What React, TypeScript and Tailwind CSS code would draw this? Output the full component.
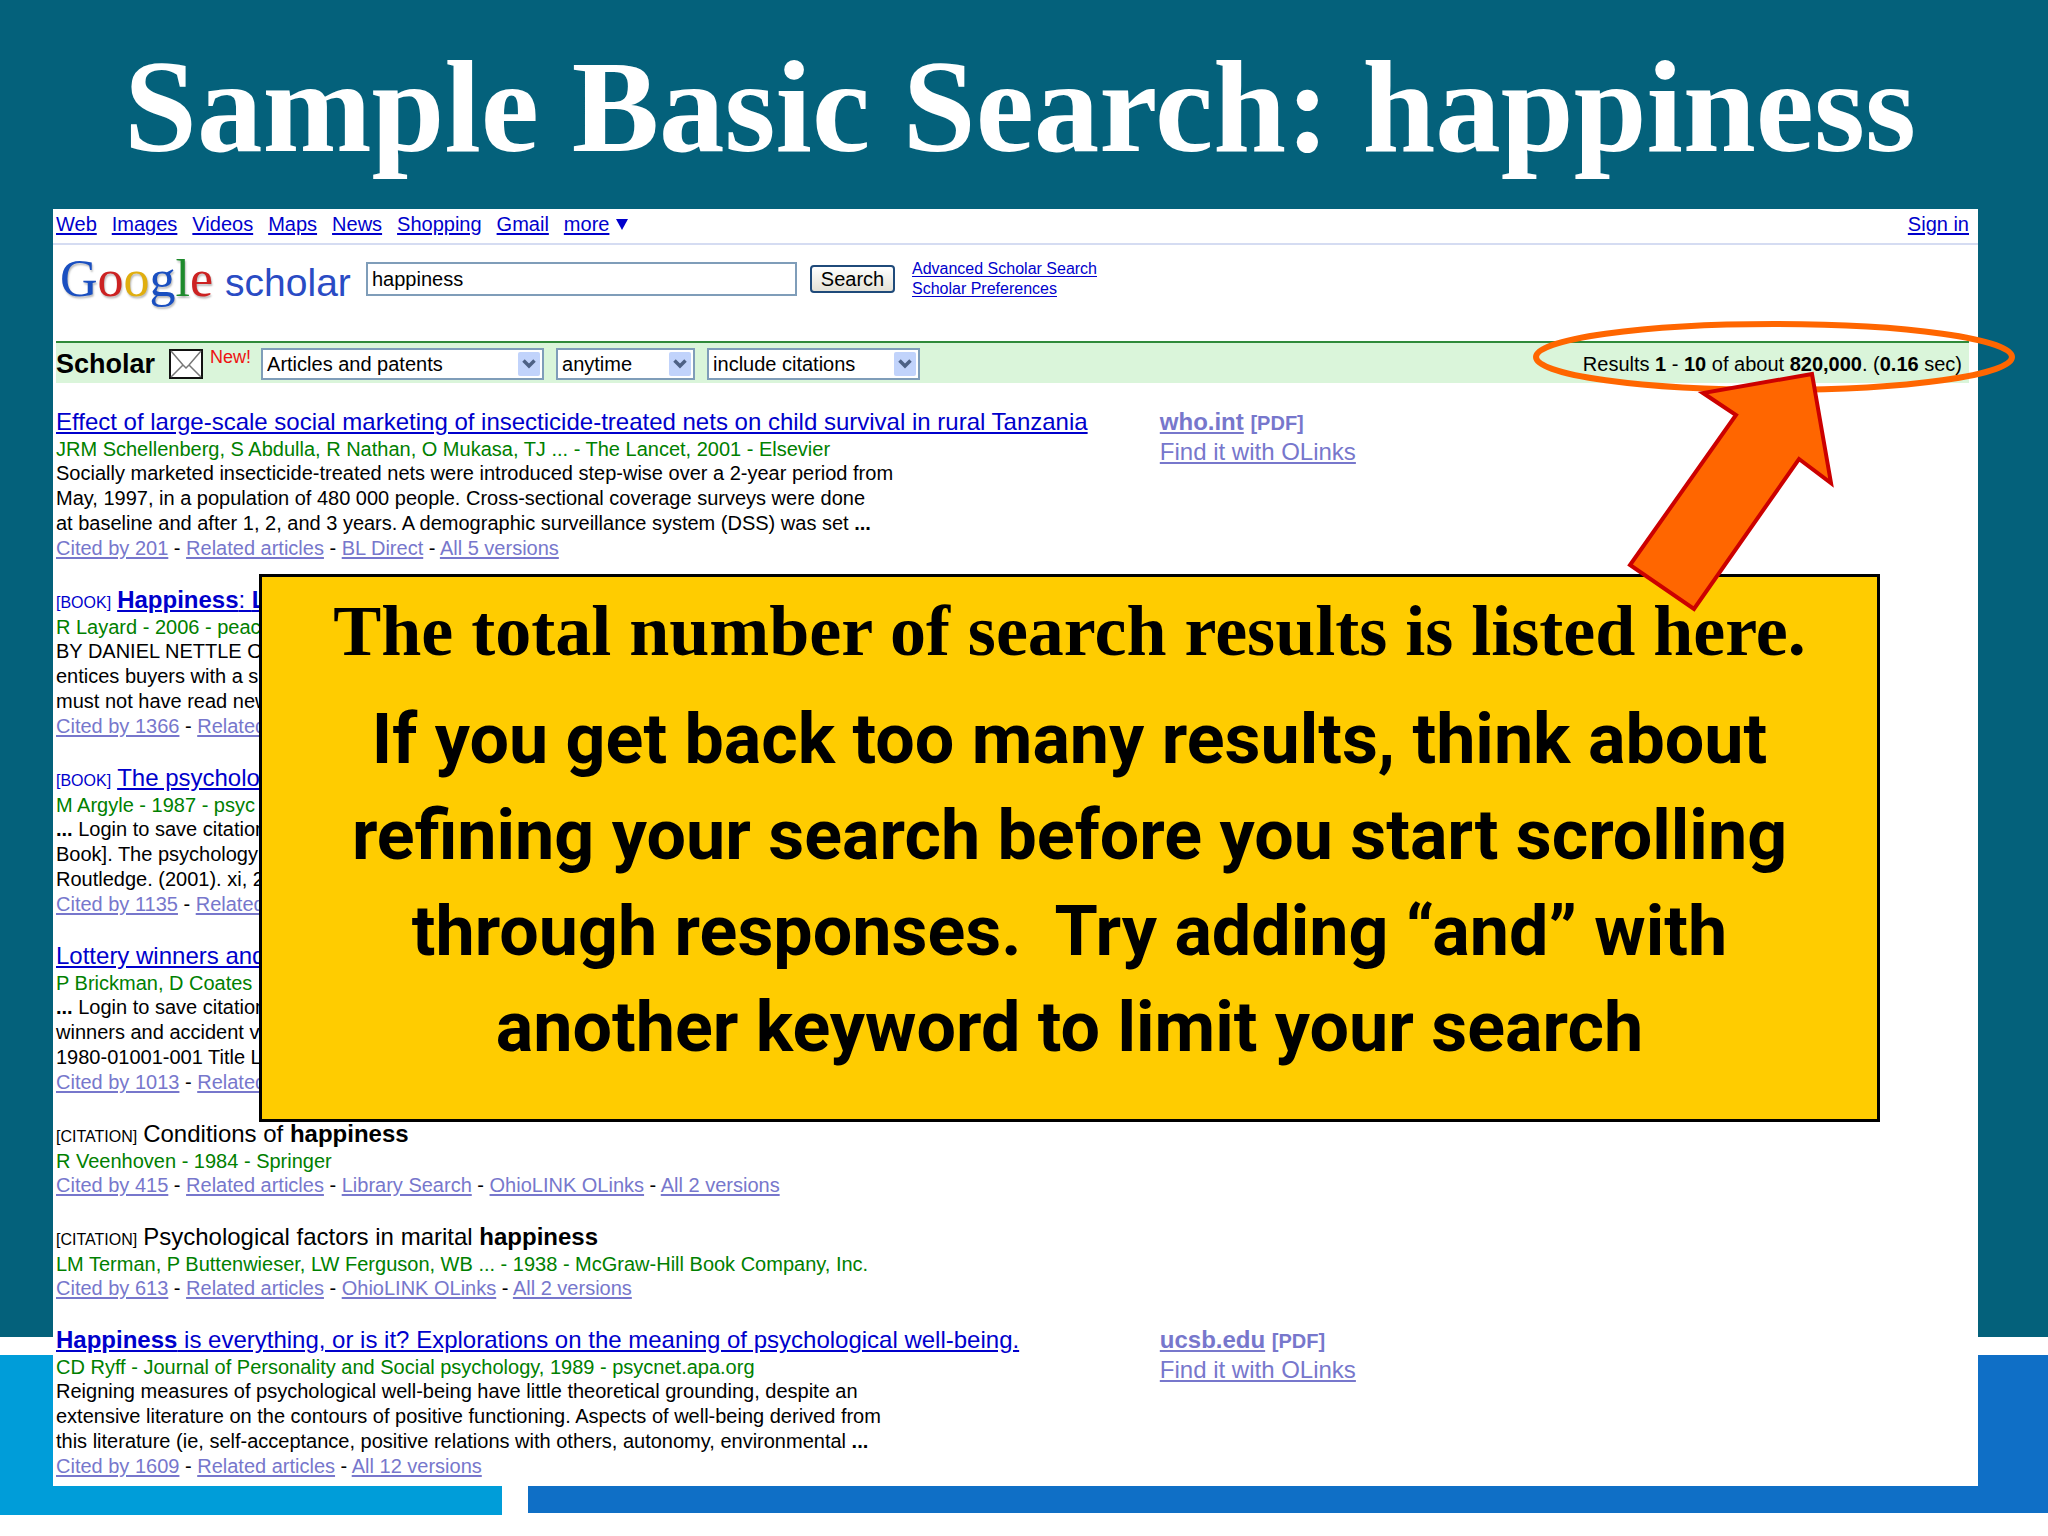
import React from 'react';

interface CiteLink {
  label: string;
}

interface Result {
  id: string;
  tag?: string;
  title: React.ReactNode;
  linked: boolean;
  source: string;
  snippet?: React.ReactNode[];
  cites: CiteLink[];
  pdf?: string;
}

const NAV_LINKS = ['Web', 'Images', 'Videos', 'Maps', 'News', 'Shopping', 'Gmail', 'more'];

const LOGO_LETTERS = [
  { char: 'G', color: 'text-[#1a4fc0]' },
  { char: 'o', color: 'text-[#cc2222]' },
  { char: 'o', color: 'text-[#e0ae10]' },
  { char: 'g', color: 'text-[#1a4fc0]' },
  { char: 'l', color: 'text-[#1e8a2c]' },
  { char: 'e', color: 'text-[#cc2222]' },
];

const toLinks = (...labels: string[]): CiteLink[] => labels.map(label => ({ label }));

const RESULTS: Result[] = [
  {
    id: 'nets',
    title: 'Effect of large-scale social marketing of insecticide-treated nets on child survival in rural Tanzania',
    linked: true,
    source: 'JRM Schellenberg, S Abdulla, R Nathan, O Mukasa, TJ ... - The Lancet, 2001 - Elsevier',
    snippet: [
      'Socially marketed insecticide-treated nets were introduced step-wise over a 2-year period from',
      'May, 1997, in a population of 480 000 people. Cross-sectional coverage surveys were done',
      <>at baseline and after 1, 2, and 3 years. A demographic surveillance system (DSS) was set <b>...</b></>,
    ],
    cites: toLinks('Cited by 201', 'Related articles', 'BL Direct', 'All 5 versions'),
    pdf: 'who.int',
  },
  {
    id: 'lessons',
    tag: '[BOOK]',
    title: <><b>Happiness</b>: <b>L</b></>,
    linked: true,
    source: 'R Layard - 2006 - peac',
    snippet: ['BY DANIEL NETTLE O', 'entices buyers with a s', 'must not have read new'],
    cites: toLinks('Cited by 1366', 'Related'),
  },
  {
    id: 'psychology',
    tag: '[BOOK]',
    title: 'The psycholog',
    linked: true,
    source: 'M Argyle - 1987 - psyc',
    snippet: [<><b>...</b> Login to save citation</>, 'Book]. The psychology', 'Routledge. (2001). xi, 2'],
    cites: toLinks('Cited by 1135', 'Related'),
  },
  {
    id: 'lottery',
    title: 'Lottery winners and',
    linked: true,
    source: 'P Brickman, D Coates',
    snippet: [<><b>...</b> Login to save citation</>, 'winners and accident v', '1980-01001-001 Title L'],
    cites: toLinks('Cited by 1013', 'Related'),
  },
  {
    id: 'conditions',
    tag: '[CITATION]',
    title: <>Conditions of <b>happiness</b></>,
    linked: false,
    source: 'R Veenhoven - 1984 - Springer',
    cites: toLinks('Cited by 415', 'Related articles', 'Library Search', 'OhioLINK OLinks', 'All 2 versions'),
  },
  {
    id: 'marital',
    tag: '[CITATION]',
    title: <>Psychological factors in marital <b>happiness</b></>,
    linked: false,
    source: 'LM Terman, P Buttenwieser, LW Ferguson, WB ... - 1938 - McGraw-Hill Book Company, Inc.',
    cites: toLinks('Cited by 613', 'Related articles', 'OhioLINK OLinks', 'All 2 versions'),
  },
  {
    id: 'wellbeing',
    title: <><b>Happiness</b> is everything, or is it? Explorations on the meaning of psychological well-being.</>,
    linked: true,
    source: 'CD Ryff - Journal of Personality and Social psychology, 1989 - psycnet.apa.org',
    snippet: [
      'Reigning measures of psychological well-being have little theoretical grounding, despite an',
      'extensive literature on the contours of positive functioning. Aspects of well-being derived from',
      <>this literature (ie, self-acceptance, positive relations with others, autonomy, environmental <b>...</b></>,
    ],
    cites: toLinks('Cited by 1609', 'Related articles', 'All 12 versions'),
    pdf: 'ucsb.edu',
  },
];

function Backdrop() {
  return (
    <div className="[grid-area:1/1] flex flex-col bg-white pb-[21px]" aria-hidden="true">
      <div className="flex-1 bg-[#04617b]" />
      <div className="mt-[18px] flex h-[160px] items-start gap-[26px]">
        <div className="h-[160px] w-[24.5%] bg-[#009dd9]" />
        <div className="h-[158px] flex-1 bg-[#0f6fc6]" />
      </div>
    </div>
  );
}

function FilterSelect({ label, value, width }: { label: string; value: string; width: string }) {
  return (
    <div className={`relative h-8 ${width}`}>
      <select
        aria-label={label}
        defaultValue={value}
        className="h-full w-full appearance-none border-2 border-[#7f9db9] bg-white pl-1 text-[20px] leading-6 text-black"
      >
        <option>{value}</option>
      </select>
      <svg className="pointer-events-none absolute right-1 top-1 h-6 w-[22px]" viewBox="0 0 22 24">
        <rect width="22" height="24" rx="2" fill="#c1d3fb" />
        <path d="M5.5 8.5 L11 14 L16.5 8.5" fill="none" stroke="#4d6185" strokeWidth="3.5" />
      </svg>
    </div>
  );
}

function ResultRow({ result }: { result: Result }) {
  return (
    <article className="mb-[25px] grid grid-cols-[57.7%_1fr] whitespace-nowrap last:mb-1">
      <div className="text-[20px]">
        <h3 className={`text-[24px] leading-[30px] ${result.linked ? 'text-[#0000cc]' : 'text-black'}`}>
          {result.tag && <span className="mr-1.5 text-[16px] leading-none">{result.tag}</span>}
          {result.linked ? <a href="#" className="underline underline-offset-2">{result.title}</a> : result.title}
        </h3>
        <p className="leading-6 text-[#008000]">{result.source}</p>
        {result.snippet?.map((line, i) => (
          <p key={i} className="leading-[25px]">{line}</p>
        ))}
        <p className="leading-6">
          {result.cites.map((cite, i) => (
            <React.Fragment key={cite.label}>
              {i > 0 && ' - '}
              <a href="#" className="text-[#7777cc] underline underline-offset-2">{cite.label}</a>
            </React.Fragment>
          ))}
        </p>
      </div>
      {result.pdf && (
        <div className="text-[24px] leading-[30px] text-[#7777cc]">
          <p className="font-bold">
            <a href="#" className="underline underline-offset-2">{result.pdf}</a>{' '}
            <span className="text-[20px] leading-none">[PDF]</span>
          </p>
          <a href="#" className="underline underline-offset-2">Find it with OLinks</a>
        </div>
      )}
    </article>
  );
}

function Callout() {
  return (
    <aside className="absolute left-[206px] right-[98px] top-[365px] border-[3px] border-black bg-[#ffcc00] pt-[10px] pb-[44px] text-center font-bold whitespace-pre text-black">
      <h2 className="mb-[16px] font-['Liberation_Serif',serif] text-[72px] leading-[88px]">
        The total number of search results is listed here.
      </h2>
      <p className="font-['Roboto',sans-serif] text-[70px] leading-[96px]">
        {'If you get back too many results, think about\nrefining your search before you start scrolling\nthrough responses.  Try adding “and” with\nanother keyword to limit your search'}
      </p>
    </aside>
  );
}

function Highlight() {
  return (
    <svg className="pointer-events-none absolute right-[-42px] top-[101px] h-[310px] w-[500px]" viewBox="0 0 500 310">
      <ellipse cx="254" cy="47" rx="238" ry="33" fill="none" stroke="#ff6600" strokeWidth="6" />
      <path
        d="M292 64 L183 83 L216 105 L110 255 L174 299 L279 149 L311 173 Z"
        fill="#ff6600"
        stroke="#cc0000"
        strokeWidth="4"
      />
    </svg>
  );
}

export default function App() {
  return (
    <div className="grid min-h-screen overflow-hidden font-['Liberation_Sans',sans-serif]">
      <Backdrop />
      <div className="[grid-area:1/1]">
        <h1 className="pt-[42px] pr-2 pb-[38px] text-center font-['Liberation_Serif',serif] text-[131px] leading-[129px] font-bold whitespace-nowrap text-white">
          Sample Basic Search: happiness
        </h1>

        <main className="relative ml-[53px] mr-[70px] bg-white text-black">
          <nav className="flex h-[36px] items-center gap-[15px] border-b-2 border-[#d5dcf2] pl-[3px] pr-[9px] pb-1 text-[20px] leading-6 text-[#0000cc]">
            {NAV_LINKS.map(link => (
              <a key={link} href="#" className="underline underline-offset-2">{link}</a>
            ))}
            <svg className="-ml-2 h-3 w-3" viewBox="0 0 12 12">
              <path d="M0 1 H12 L6 12 Z" fill="#0000cc" />
            </svg>
            <a href="#" className="ml-auto underline underline-offset-2">Sign in</a>
          </nav>

          <form className="flex h-[96px] items-start pl-[7px] pt-1" onSubmit={e => e.preventDefault()}>
            <div className="flex w-[306px] items-baseline gap-3">
              <span className="font-['Liberation_Serif',serif] text-[52px] leading-[60px] [text-shadow:1px_2px_2px_#bbbbbb]">
                {LOGO_LETTERS.map((letter, i) => (
                  <span key={i} className={letter.color}>{letter.char}</span>
                ))}
              </span>
              <span className="text-[39px] leading-[60px] text-[#2a4bc4]">scholar</span>
            </div>
            <input
              type="text"
              aria-label="Search terms"
              defaultValue="happiness"
              className="mt-[13px] h-[34px] w-[431px] border-2 border-[#7f9db9] bg-white pl-1 text-[20px]"
            />
            <button
              type="submit"
              className="mt-[16px] ml-[13px] h-[28px] w-[85px] rounded border-2 border-[#1f4a7a] bg-linear-to-b from-white to-[#e4e1d6] text-[20px] leading-6"
            >
              Search
            </button>
            <div className="mt-[10px] ml-[17px] flex flex-col text-[16px] leading-5 text-[#0000cc]">
              <a href="#" className="underline underline-offset-2">Advanced Scholar Search</a>
              <a href="#" className="underline underline-offset-2">Scholar Preferences</a>
            </div>
          </form>

          <div className="ml-[3px] mr-[9px] flex h-[42px] items-center border-t-2 border-[#2f8a3a] bg-[#daf5da] pt-0.5">
            <strong className="text-[27px]">Scholar</strong>
            <svg className="ml-3.5 h-[30px] w-[34px]" viewBox="0 0 34 30">
              <rect x="1" y="1" width="32" height="28" fill="#ffffff" stroke="#111111" strokeWidth="2" />
              <path d="M2 2 L14 16 L17 19 L20 16 L32 2 M2 28 L14 16 M32 28 L20 16" fill="none" stroke="#777777" strokeWidth="1.5" />
            </svg>
            <span className="ml-[7px] self-start text-[18px] leading-6 text-[#ee1111]">New!</span>
            <div className="ml-2.5 flex gap-3">
              <FilterSelect label="Document type" value="Articles and patents" width="w-[283px]" />
              <FilterSelect label="Date" value="anytime" width="w-[139px]" />
              <FilterSelect label="Citations" value="include citations" width="w-[213px]" />
            </div>
            <p className="ml-auto pr-[7px] text-[20px]">
              Results <b>1</b> - <b>10</b> of about <b>820,000</b>. (<b>0.16</b> sec)
            </p>
          </div>

          <section className="pt-[24px] pl-[3px] pr-[9px] pb-1">
            {RESULTS.map(result => (
              <ResultRow key={result.id} result={result} />
            ))}
          </section>

          <Callout />
          <Highlight />
        </main>
      </div>
    </div>
  );
}
